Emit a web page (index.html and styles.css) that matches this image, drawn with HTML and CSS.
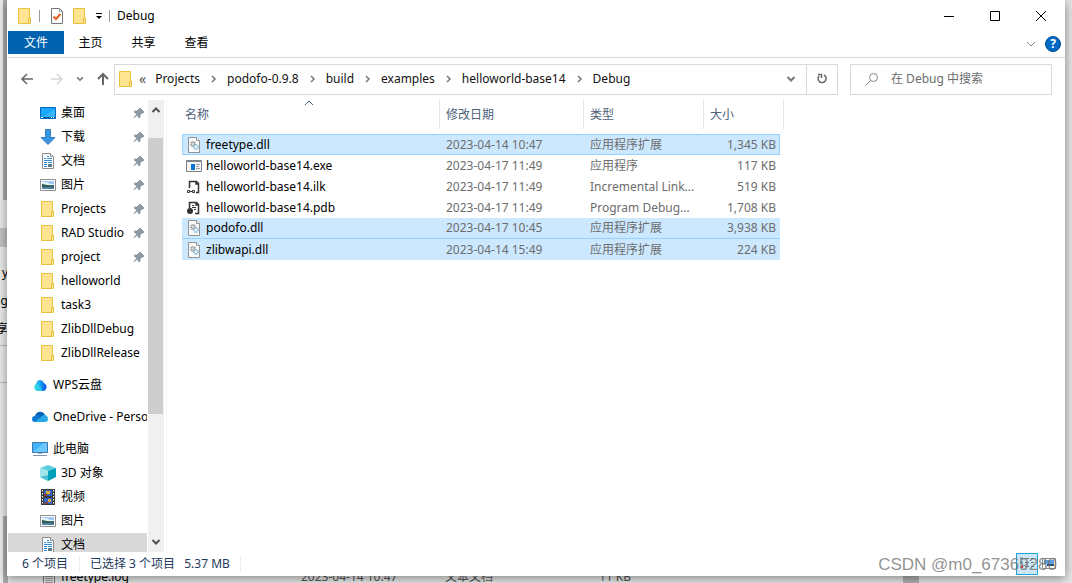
FILE: index.html
```html
<!DOCTYPE html>
<html lang="zh-CN">
<head>
	<meta charset="UTF-8">
	<meta name="viewport" content="width=device-width, initial-scale=1.0">
	<title>Debug</title>
	<link rel="stylesheet" href="styles.css">
</head>
<body>

	<!-- Иконки -->
	<svg class="sprite" aria-hidden="true">
		<symbol id="folder" viewBox="0 0 16 16">
			<path d="M1.500 .5h11v15h-11z" fill="#ffe591" stroke="#e9c13f"/>
			<path d="M11.500 15.500v-5l2-.5v5.500z" fill="#ffe591" stroke="#e9c13f"/>
		</symbol>
		<symbol id="desktop" viewBox="0 0 16 16">
			<path d="M.5 2.500h15v11h-15z" fill="#1aa7ff" stroke="#0067b8"/>
			<path d="M1 13 15 4v9z" fill="#35b5ff"/>
			<path d="M1 12.500h14" stroke="#0a5c9e"/>
			<path d="M1 12.500h2M11 12.500h1M13 12.500h1" stroke="#fff"/>
		</symbol>
		<symbol id="download" viewBox="0 0 16 16">
			<path d="M5.500.5h5v8h4.500l-7 7-7-7h4.500z" fill="#3a96e0" stroke="#2f7fc9"/>
		</symbol>
		<symbol id="document" viewBox="0 0 16 16">
			<path d="M2.500.5h8l3 3v12h-11z" fill="#fff" stroke="#8c8c8c"/>
			<path d="M10.500.5v3h3" fill="#eee" stroke="#8c8c8c"/>
			<path d="M4 5.500h2M7 3.500h2M7 5.500h5M4 7.500h8M4 9.500h3M8 9.500h4M4 11.500h3M4 13.500h3" stroke="#2f8fdd"/>
			<path d="M8 11h4v3H8z" fill="#557a8b"/>
		</symbol>
		<symbol id="log" viewBox="0 0 16 16">
			<path d="M2.500.5h11v15h-11z" fill="#eee" stroke="#777"/>
			<path d="M4 7.500h8M4 9.500h8M4 11.500h8M4 13.500h8" stroke="#999"/>
		</symbol>
		<symbol id="picture" viewBox="0 0 16 16">
			<path d="M.5 2.500h15v11h-15z" fill="#fff" stroke="#8f8f8f"/>
			<path d="M2 4h12v8H2z" fill="#9fc9f2"/>
			<path d="M2 5h5l3 2h4v1H2z" fill="#e2f0fb"/>
			<path d="M2 7c3 0 4 2 12 1v2H2z" fill="#2c5b49"/>
			<path d="M2 10h12v2H2z" fill="#4d80a8"/>
		</symbol>
		<symbol id="wps" viewBox="0 0 16 16">
			<defs>
				<linearGradient id="wps-fill"><stop offset="0" stop-color="#35dfe0"/><stop offset=".45" stop-color="#18a6ff"/><stop offset="1" stop-color="#0a4fe0"/></linearGradient>
			</defs>
			<path d="M5 14a4 4 0 0 1-1-7C5 2 10 2 12 6c4 2 3 8-1 8z" fill="url(#wps-fill)"/>
			<path d="M4 7c3 0 5 2 6 7H5a4 4 0 0 1-1-7z" fill="#35dfe0" opacity=".6"/>
		</symbol>
		<symbol id="onedrive" viewBox="0 0 16 16">
			<path d="M3 7c1-5 8-6 10-1L8 11z" fill="#0364b8"/>
			<path d="M3 13a3 3 0 0 1 0-6c2-1 4 0 6 1l-5 5z" fill="#0f78d4"/>
			<path d="M3 13 10 7c2-2 6-1 6 3 0 2-1 3-3 3z" fill="#28a8ea"/>
		</symbol>
		<symbol id="computer" viewBox="0 0 16 16">
			<path d="M.5 1.500h15v10h-15z" fill="#41b2fb" stroke="#3c7aa8"/>
			<path d="M1 11 12 2h3v9z" fill="#6ac8ff"/>
			<path d="M6 12.500h4" stroke="#9ab3c6"/>
			<path d="M1 14.500h14" stroke="#7d99ae"/>
		</symbol>
		<symbol id="cube" viewBox="0 0 16 16">
			<path d="m8 0 8 3-8 3-8-3z" fill="#5fcfdd"/>
			<path d="m0 3 8 3v10l-8-4z" fill="#a0e6ec"/>
			<path d="m16 3-8 3v10l8-4z" fill="#009fba"/>
			<path d="m8 10-8 2 8 4z" fill="#4cc3d2"/>
		</symbol>
		<symbol id="video" viewBox="0 0 16 16">
			<path d="M1 0h14v16H1z" fill="#3b3b3b"/>
			<path d="M2.500 1v14M13.500 1v14" stroke="#fff" stroke-dasharray="1.500 1.500"/>
			<path d="M4 1h8v6H4zM4 9h8v6H4z" fill="#3267c9"/>
			<path d="M6 2h4v3H6zM8 10h3v3H8z" fill="#e2ab2c"/>
			<path d="M4 5h3v2H4zM5 13h3v2H5z" fill="#8d3f35"/>
		</symbol>
		<symbol id="pin" viewBox="0 0 12 12">
			<path d="m7 1 4 4-1 1H9L7 8v2l-1 1-2-3-3 3 3-4-3-2 1-1h2l2-2V2z" fill="#8d9aa5" stroke="#8d9aa5"/>
		</symbol>
		<symbol id="dll" viewBox="0 0 16 16">
			<path d="M2.500.5h8l3 3v12h-11z" fill="#fafafa" stroke="#929292"/>
			<path d="M10.500.5v3h3" fill="#fff" stroke="#929292"/>
			<circle cx="7" cy="7" r="2" fill="#ddd" stroke="#929292" stroke-width="2" stroke-dasharray="1 .6"/>
			<circle cx="10" cy="10" r="2" fill="#fff" stroke="#83b8dc" stroke-width="2" stroke-dasharray="1 .6"/>
		</symbol>
		<symbol id="exe" viewBox="0 0 16 16">
			<path d="M.5 2.500h15v11h-15z" fill="#f5f5f5" stroke="#80878c"/>
			<path d="M1 3.500h14" stroke="#80878c"/>
			<path d="M5 6h4v6H5z" fill="#0a74d6"/>
			<path d="M10 6.500h4M10 8.500h3M10 10.500h4" stroke="#9aa0a4"/>
		</symbol>
		<symbol id="ilk" viewBox="0 0 16 16" fill="none" stroke="#333">
			<path d="M3.500 9V2.500h7l2 2v9H10M10 2v3h3" stroke-width="1.500"/>
			<path d="M1.500 11.500h2v2h-2zM6.500 11.500h2v2h-2zM3 12.500h4"/>
		</symbol>
		<symbol id="pdb" viewBox="0 0 16 16" fill="none" stroke="#333">
			<path d="M3.500 8V2.500h7l2 2v9H9M10 2v3h3" stroke-width="1.500"/>
			<path d="M6 5.500h2M6 7.500h4M8 9.500h2"/>
			<circle cx="4" cy="11" r="3" fill="#333" stroke="none"/>
		</symbol>
		<symbol id="down" viewBox="0 0 10 10">
			<path d="m1.500 3 3.500 3.500L8.500 3" fill="none" stroke="currentColor" stroke-width="2"/>
		</symbol>
		<symbol id="thin-down" viewBox="0 0 10 10">
			<path d="m1 3 4 4 4-4" fill="none" stroke="currentColor"/>
		</symbol>
		<symbol id="next" viewBox="0 0 10 10">
			<path d="m4 2 3 3-3 3" fill="none" stroke="currentColor" stroke-width="1.500"/>
		</symbol>
	</svg>

	<!-- Окно позади -->
	<div class="backdrop" aria-hidden="true">
		<div class="edge">
			<div class="edge-scroll"></div>
			<div class="edge-gap"></div>
			<div class="edge-block"></div>
			<div class="edge-body">
				<span class="clip">y</span>
				<span class="clip">ug</span>
				<span class="clip">享</span>
			</div>
			<div class="edge-line"></div>
			<div class="edge-rest"></div>
			<div class="edge-scroll"></div>
		</div>
		<div class="back-row">
			<svg width="16" height="16"><use href="#log"/></svg>
			<span class="back-name">freetype.log</span>
			<span class="back-date">2023-04-14 10:47</span>
			<span class="back-type">文本文档</span>
			<span class="back-size">11 KB</span>
			<span class="back-scroll"></span>
		</div>
	</div>

	<div class="window">
		<!-- Заголовок -->
		<header class="titlebar">
			<svg width="16" height="16"><use href="#folder"/></svg>
			<span class="bar"></span>
			<button class="quick" aria-label="属性">
				<svg width="16" height="16" viewBox="0 0 16 16">
					<path d="M2.500.5h8l3 3v12h-11z" fill="#fff" stroke="#777"/>
					<path d="M10.500.5v3h3" fill="none" stroke="#999"/>
					<path d="m4.500 8.500 2.500 2.500 4.500-5" fill="none" stroke="#ed5d20" stroke-width="2"/>
				</svg>
			</button>
			<button class="quick" aria-label="新建文件夹"><svg width="16" height="16"><use href="#folder"/></svg></button>
			<button class="quick customize" aria-label="自定义快速访问工具栏">
				<svg width="8" height="8" viewBox="0 0 8 8"><path d="M1 1.500h6" stroke="#000"/><path d="M1 4h6L4 7z"/></svg>
			</button>
			<span class="bar"></span>
			<h1>Debug</h1>
			<div class="controls">
				<button aria-label="最小化"><svg width="12" height="12" viewBox="0 0 12 12"><path d="M1 6.500h10" stroke="#000"/></svg></button>
				<button aria-label="最大化"><svg width="12" height="12" viewBox="0 0 12 12"><path d="M1.500 1.500h9v9h-9z" fill="none" stroke="#000"/></svg></button>
				<button aria-label="关闭"><svg width="12" height="12" viewBox="0 0 12 12"><path d="m1 1 10 10M11 1 1 11" stroke="#000"/></svg></button>
			</div>
		</header>

		<!-- Лента -->
		<nav class="ribbon">
			<button class="tab file">文件</button>
			<button class="tab">主页</button>
			<button class="tab">共享</button>
			<button class="tab">查看</button>
			<button class="expand" aria-label="展开功能区"><svg width="10" height="10"><use href="#thin-down"/></svg></button>
			<button class="help" aria-label="帮助">?</button>
		</nav>

		<!-- Адресная строка -->
		<div class="navbar">
			<div class="history">
				<button aria-label="后退"><svg width="14" height="14" viewBox="0 0 14 14"><path d="M13 7H2m5-5L2 7l5 5" fill="none" stroke="#666" stroke-width="1.500"/></svg></button>
				<button class="forward" aria-label="前进"><svg width="14" height="14" viewBox="0 0 14 14"><path d="M1 7h11M7 2l5 5-5 5" fill="none" stroke="#d8d8d8" stroke-width="1.500"/></svg></button>
				<button class="recent" aria-label="最近浏览的位置"><svg width="8" height="8"><use href="#down"/></svg></button>
				<button aria-label="上移"><svg width="14" height="14" viewBox="0 0 14 14"><path d="M7 13V2M2 7l5-5 5 5" fill="none" stroke="#666" stroke-width="2"/></svg></button>
			</div>
			<div class="address">
				<svg width="16" height="16"><use href="#folder"/></svg>
				<span class="more">«</span>
				<a href="#">Projects</a>
				<svg width="10" height="10"><use href="#next"/></svg>
				<a href="#">podofo-0.9.8</a>
				<svg width="10" height="10"><use href="#next"/></svg>
				<a href="#">build</a>
				<svg width="10" height="10"><use href="#next"/></svg>
				<a href="#">examples</a>
				<svg width="10" height="10"><use href="#next"/></svg>
				<a href="#">helloworld-base14</a>
				<svg width="10" height="10"><use href="#next"/></svg>
				<a href="#">Debug</a>
				<button class="drop" aria-label="以前的位置"><svg width="10" height="10"><use href="#down"/></svg></button>
				<button class="refresh" aria-label="刷新">
					<svg width="12" height="12" viewBox="0 0 12 12"><path d="M3 3a4 4 0 1 0 5-1M2 1.500h3.500V5" fill="none" stroke="#666" stroke-width="1.500"/></svg>
				</button>
			</div>
			<label class="search">
				<svg width="14" height="14" viewBox="0 0 14 14"><circle cx="8.500" cy="5.500" r="4" fill="none" stroke="#888"/><path d="m5.500 8.500-5 5" stroke="#888"/></svg>
				<input type="search" placeholder="在 Debug 中搜索" aria-label="搜索">
			</label>
		</div>

		<div class="main">
			<!-- Панель навигации -->
			<nav class="sidebar">
				<a href="#" class="sub"><svg class="icon"><use href="#desktop"/></svg><span>桌面</span><svg class="pin"><use href="#pin"/></svg></a>
				<a href="#" class="sub"><svg class="icon"><use href="#download"/></svg><span>下载</span><svg class="pin"><use href="#pin"/></svg></a>
				<a href="#" class="sub"><svg class="icon"><use href="#document"/></svg><span>文档</span><svg class="pin"><use href="#pin"/></svg></a>
				<a href="#" class="sub"><svg class="icon"><use href="#picture"/></svg><span>图片</span><svg class="pin"><use href="#pin"/></svg></a>
				<a href="#" class="sub"><svg class="icon"><use href="#folder"/></svg><span>Projects</span><svg class="pin"><use href="#pin"/></svg></a>
				<a href="#" class="sub"><svg class="icon"><use href="#folder"/></svg><span>RAD Studio</span><svg class="pin"><use href="#pin"/></svg></a>
				<a href="#" class="sub"><svg class="icon"><use href="#folder"/></svg><span>project</span><svg class="pin"><use href="#pin"/></svg></a>
				<a href="#" class="sub"><svg class="icon"><use href="#folder"/></svg><span>helloworld</span></a>
				<a href="#" class="sub"><svg class="icon"><use href="#folder"/></svg><span>task3</span></a>
				<a href="#" class="sub"><svg class="icon"><use href="#folder"/></svg><span>ZlibDllDebug</span></a>
				<a href="#" class="sub"><svg class="icon"><use href="#folder"/></svg><span>ZlibDllRelease</span></a>
				<a href="#" class="root"><svg class="icon"><use href="#wps"/></svg><span>WPS云盘</span></a>
				<a href="#" class="root"><svg class="icon"><use href="#onedrive"/></svg><span>OneDrive - Personal</span></a>
				<a href="#" class="root"><svg class="icon"><use href="#computer"/></svg><span>此电脑</span></a>
				<a href="#" class="sub"><svg class="icon"><use href="#cube"/></svg><span>3D 对象</span></a>
				<a href="#" class="sub"><svg class="icon"><use href="#video"/></svg><span>视频</span></a>
				<a href="#" class="sub"><svg class="icon"><use href="#picture"/></svg><span>图片</span></a>
				<a href="#" class="sub current"><svg class="icon"><use href="#document"/></svg><span>文档</span></a>
			</nav>
			<div class="scrollbar">
				<button class="up" aria-label="向上滚动"><svg width="10" height="10"><use href="#down"/></svg></button>
				<div class="track"><div class="thumb"></div></div>
				<button aria-label="向下滚动"><svg width="10" height="10"><use href="#down"/></svg></button>
			</div>

			<!-- Файлы -->
			<div class="files">
				<table>
					<thead>
						<tr>
							<th class="name">名称<svg class="sort" width="10" height="10"><use href="#thin-down"/></svg></th>
							<th class="date">修改日期</th>
							<th class="type">类型</th>
							<th class="size">大小</th>
						</tr>
					</thead>
					<tbody>
						<tr class="selected focused">
							<td><div class="file-name"><svg class="icon"><use href="#dll"/></svg>freetype.dll</div></td>
							<td>2023-04-14 10:47</td>
							<td>应用程序扩展</td>
							<td>1,345 KB</td>
						</tr>
						<tr>
							<td><div class="file-name"><svg class="icon"><use href="#exe"/></svg>helloworld-base14.exe</div></td>
							<td>2023-04-17 11:49</td>
							<td>应用程序</td>
							<td>117 KB</td>
						</tr>
						<tr>
							<td><div class="file-name"><svg class="icon"><use href="#ilk"/></svg>helloworld-base14.ilk</div></td>
							<td>2023-04-17 11:49</td>
							<td>Incremental Link...</td>
							<td>519 KB</td>
						</tr>
						<tr>
							<td><div class="file-name"><svg class="icon"><use href="#pdb"/></svg>helloworld-base14.pdb</div></td>
							<td>2023-04-17 11:49</td>
							<td>Program Debug...</td>
							<td>1,708 KB</td>
						</tr>
						<tr class="selected joined">
							<td><div class="file-name"><svg class="icon"><use href="#dll"/></svg>podofo.dll</div></td>
							<td>2023-04-17 10:45</td>
							<td>应用程序扩展</td>
							<td>3,938 KB</td>
						</tr>
						<tr class="selected">
							<td><div class="file-name"><svg class="icon"><use href="#dll"/></svg>zlibwapi.dll</div></td>
							<td>2023-04-14 15:49</td>
							<td>应用程序扩展</td>
							<td>224 KB</td>
						</tr>
					</tbody>
				</table>
			</div>
		</div>

		<!-- Строка состояния -->
		<footer class="statusbar">
			<span class="count">6 个项目</span>
			<span class="chosen">已选择 3 个项目&ensp; 5.37 MB</span>
			<div class="views">
				<button class="active" aria-label="详细信息">
					<svg width="16" height="14" viewBox="0 0 16 14"><path d="M1 1.500h3M1 5.500h3M1 9.500h3" stroke="#7b8a94" stroke-width="2"/><path d="M6 1.500h4M12 1.500h3M6 5.500h4M12 5.500h3M6 9.500h4M12 9.500h3" stroke="#777"/><path d="M2 9h2v2H2z" fill="#c33"/></svg>
				</button>
				<button aria-label="大缩略图">
					<svg width="14" height="12" viewBox="0 0 14 12"><path d="M.5.5h13v10H.5z" fill="#fff" stroke="#8f8f8f"/><path d="M2 2h10v4H2z" fill="#5b9fe0"/><path d="M5 6h7v2H5z" fill="#2a4d70"/></svg>
				</button>
			</div>
		</footer>
	</div>

	<div class="watermark">CSDN @m0_67369280</div>

</body>
</html>
```
FILE: styles.css
```css
* {
    box-sizing: border-box;
}
body {
    margin: 0;
    height: 100vh;
    padding: 0 7px 7px;
    position: relative;
    overflow: hidden;
    background-color: #e6e6e6;
    font-family: "Noto Sans", "Noto Sans CJK SC", sans-serif;
    font-size: 12px;
    line-height: 16px;
    color: #000;
}
button {
    border: 0;
    padding: 0;
    background: none;
    font: inherit;
    color: inherit;
    display: flex;
    align-items: center;
    justify-content: center;
}
a {
    color: inherit;
    text-decoration: none;
}
svg {
    flex: none;
}
.sprite {
    position: absolute;
    width: 0;
    height: 0;
}
.icon {
    width: 16px;
    height: 16px;
}

/* Окно позади */
.backdrop {
    position: absolute;
    inset: 0;
}
.edge {
    width: 8px;
    height: 100%;
    display: flex;
    flex-direction: column;
    overflow: hidden;
    background-color: #ececec;
}
.edge-scroll {
    flex: 3;
    margin-left: 3px;
    background-color: #ababab;
}
.edge-gap {
    height: 28px;
}
.edge-block {
    height: 19px;
    background-color: #c4c4c4;
}
.edge-body {
    height: 98px;
    padding-top: 18px;
    display: flex;
    flex-direction: column;
    align-items: flex-end;
    gap: 12px;
}
.clip {
    height: 16px;
}
.edge-line {
    height: 38px;
    border-top: 1px solid #bbb;
    border-bottom: 1px solid #bbb;
}
.edge-rest {
    flex: 2;
}
.edge .edge-scroll:last-child {
    flex: 1;
}
.back-row {
    position: absolute;
    left: 18px;
    right: 0;
    bottom: 0;
    height: 12px;
    padding-left: 23px;
    display: flex;
    align-items: center;
    color: #555;
}
.back-name {
    width: 244px;
    padding-left: 4px;
    color: #000;
}
.back-date {
    width: 144px;
}
.back-type {
    width: 120px;
}
.back-size {
    width: 66px;
    text-align: right;
}
.back-scroll {
    width: 16px;
    height: 100%;
    margin-left: 272px;
    background-color: #b0b0b0;
}

/* Окно */
.window {
    position: relative;
    height: 100%;
    display: flex;
    flex-direction: column;
    background-color: #fff;
    border-left: 1px solid #fff;
    box-shadow: 0 2px 10px rgba(0, 0, 0, 0.45);
}
.titlebar {
    height: 31px;
    padding-left: 9px;
    display: flex;
    align-items: center;
}
.bar {
    width: 1px;
    height: 12px;
    margin: 0 7px 0 6px;
    background-color: #999;
}
.quick {
    width: 16px;
    height: 16px;
    margin-left: 2px;
}
.quick + .quick {
    margin-left: 7px;
}
.quick.customize {
    width: 8px;
}
h1 {
    margin: 0;
    font-size: 12px;
    font-weight: normal;
}
.controls {
    margin-left: auto;
    padding-right: 1px;
    display: flex;
}
.controls button {
    width: 46px;
    height: 31px;
}
.ribbon {
    height: 27px;
    padding-right: 4px;
    display: flex;
    align-items: center;
    border-bottom: 1px solid #dadbdc;
}
.tab {
    width: 53px;
    height: 23px;
    margin-bottom: 3px;
    padding-top: 1px;
}
.tab.file {
    width: 56px;
    background-color: #0063b1;
    color: #fff;
}
.expand {
    margin-left: auto;
    color: #888;
}
.help {
    width: 16px;
    height: 16px;
    margin-left: 9px;
    border: 1px solid #004a8f;
    border-radius: 8px;
    background-color: #0069c5;
    color: #fff;
    font-weight: bold;
}
.navbar {
    height: 42px;
    padding-right: 13px;
    display: flex;
    align-items: center;
}
.history {
    width: 106px;
    padding: 0 6px 0 12px;
    display: flex;
    align-items: center;
    gap: 12px;
}
.history .forward {
    margin-left: 4px;
}
.recent {
    color: #777;
}
.address,
.search {
    height: 31px;
    display: flex;
    align-items: center;
    border: 1px solid #d9d9d9;
}
.address {
    flex: 1;
    padding-left: 3px;
    color: #111;
}
.address svg {
    color: #777;
}
.address a {
    margin: 0 8px 0 9px;
}
.address .more {
    margin-left: 5px;
    color: #555;
    font-size: 14px;
}
.drop {
    width: 30px;
    height: 29px;
    margin-left: auto;
}
.refresh {
    width: 31px;
    height: 29px;
    border-left: 1px solid #d9d9d9;
}
.search {
    width: 202px;
    margin-left: 12px;
    padding-left: 14px;
}
.search input {
    flex: 1;
    min-width: 0;
    margin-left: 12px;
    padding: 0;
    border: 0;
    outline: 0;
    background: none;
    font: inherit;
}
.search input::placeholder {
    color: #6d6d6d;
}

/* Панель навигации */
.main {
    flex: 1;
    min-height: 0;
    display: flex;
}
.sidebar {
    width: 139px;
    padding-top: 1px;
    overflow: hidden;
}
.sidebar a {
    height: 24px;
    padding-right: 2px;
    display: flex;
    align-items: center;
    gap: 5px;
    white-space: nowrap;
}
.sidebar .sub {
    padding-left: 32px;
}
.sidebar .root {
    margin: 8px 0;
    padding-left: 24px;
}
.sidebar .root:has(+ .sub) {
    margin-bottom: 0;
}
.sidebar .current {
    background-color: #d9d9d9;
}
.pin {
    width: 12px;
    height: 12px;
    margin-left: auto;
}
.scrollbar {
    width: 16px;
    margin-left: 1px;
    display: flex;
    flex-direction: column;
    background-color: #f0f0f0;
    color: #505050;
}
.scrollbar button {
    width: 15px;
    height: 20px;
}
.scrollbar .up svg {
    transform: rotate(180deg);
}
.track {
    flex: 1;
    padding-top: 18px;
}
.thumb {
    width: 15px;
    height: 70%;
    background-color: #cdcdcd;
}

/* Файлы */
.files {
    flex: 1;
    margin-left: 2px;
    padding-left: 15px;
    border-left: 1px solid #f4f4f4;
}
table {
    width: 598px;
    table-layout: fixed;
    border-collapse: separate;
    border-spacing: 0;
}
th {
    height: 29px;
    padding: 0 0 0 6px;
    position: relative;
    border-left: 1px solid #e5e5e5;
    font-weight: normal;
    text-align: left;
    color: #4c607a;
}
th.name {
    width: 257px;
    padding-left: 3px;
    border-left: 0;
}
th.date {
    width: 144px;
}
th.type {
    width: 120px;
}
th.size::after {
    content: "";
    position: absolute;
    top: 0;
    right: -4px;
    width: 1px;
    height: 100%;
    background-color: #e5e5e5;
}
.sort {
    position: absolute;
    left: 122px;
    top: -2px;
    transform: rotate(180deg);
}
thead::after {
    content: "";
    display: block;
    height: 5px;
}
td {
    height: 21px;
    padding: 0 0 0 7px;
    color: #6d6d6d;
    white-space: nowrap;
    border: 0 solid #99d1ff;
}
td:first-child {
    padding-left: 4px;
    color: #000;
}
td:last-child {
    padding: 0 4px 0 0;
    text-align: right;
}
.file-name {
    display: flex;
    align-items: center;
    gap: 4px;
}
.selected td {
    background-color: #cce8ff;
}
.focused td,
.joined td {
    border-bottom-width: 1px;
}
.focused td {
    border-top-width: 1px;
}
.focused td:first-child {
    padding-left: 3px;
    border-left-width: 1px;
}
.focused td:last-child {
    padding-right: 3px;
    border-right-width: 1px;
}

/* Строка состояния */
.statusbar {
    height: 24px;
    display: flex;
    align-items: center;
    color: #1e395b;
}
.statusbar span {
    border-right: 1px solid #eee;
}
.count {
    width: 72px;
    padding-left: 14px;
    white-space: nowrap;
}
.chosen {
    padding: 0 10px;
}
.views {
    margin-left: auto;
    padding-right: 5px;
    display: flex;
}
.views button {
    width: 22px;
    height: 22px;
}
.views .active {
    border: 1px solid #26a0da;
    background-color: #cbe8f6;
}
.watermark {
    position: absolute;
    right: 15px;
    bottom: 8px;
    font: 17px/20px "Liberation Sans", sans-serif;
    color: rgba(110, 110, 110, 0.75);
}
```
